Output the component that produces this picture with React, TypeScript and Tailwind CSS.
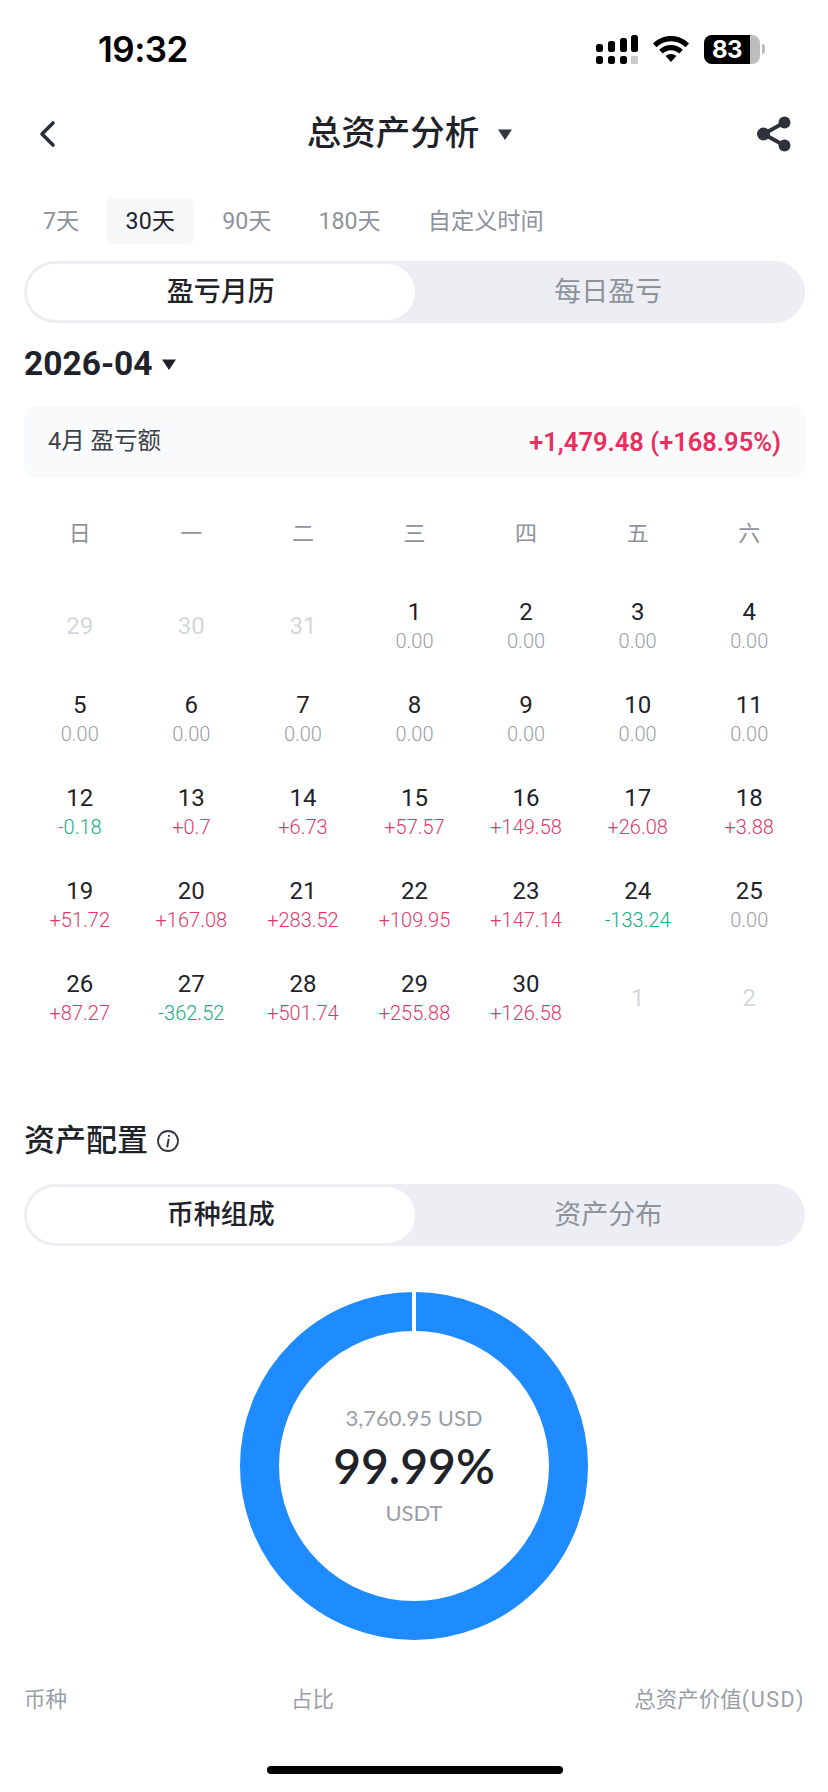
import React from 'react';

const CJK = '[font-family:Roboto,"Noto_Sans_CJK_SC",sans-serif]';

type Day = { d: number; v?: string; muted?: boolean };

const days: Day[] = [
    { d: 29, muted: true }, { d: 30, muted: true }, { d: 31, muted: true },
    { d: 1, v: '0.00' }, { d: 2, v: '0.00' }, { d: 3, v: '0.00' }, { d: 4, v: '0.00' },
    { d: 5, v: '0.00' }, { d: 6, v: '0.00' }, { d: 7, v: '0.00' }, { d: 8, v: '0.00' },
    { d: 9, v: '0.00' }, { d: 10, v: '0.00' }, { d: 11, v: '0.00' },
    { d: 12, v: '-0.18' }, { d: 13, v: '+0.7' }, { d: 14, v: '+6.73' }, { d: 15, v: '+57.57' },
    { d: 16, v: '+149.58' }, { d: 17, v: '+26.08' }, { d: 18, v: '+3.88' },
    { d: 19, v: '+51.72' }, { d: 20, v: '+167.08' }, { d: 21, v: '+283.52' }, { d: 22, v: '+109.95' },
    { d: 23, v: '+147.14' }, { d: 24, v: '-133.24' }, { d: 25, v: '0.00' },
    { d: 26, v: '+87.27' }, { d: 27, v: '-362.52' }, { d: 28, v: '+501.74' }, { d: 29, v: '+255.88' },
    { d: 30, v: '+126.58' }, { d: 1, muted: true }, { d: 2, muted: true },
];

const valueColor = (v: string) => {
    if (v.startsWith('+')) return 'text-[#e0386a]';
    if (v.startsWith('-')) return 'text-[#16ad80]';
    return 'text-[#9a9ea6]';
};

const Segment = ({ left, right }: { left: string; right: string }) => (
    <div className="ml-6 mr-[23px] grid h-[62px] grid-cols-2 rounded-full bg-[#eceef3] p-[3px]">
        <div className="flex items-center justify-center rounded-full bg-white text-[27px] font-medium text-[#1f2329]">{left}</div>
        <div className="flex items-center justify-center text-[27px] text-[#8e929b]">{right}</div>
    </div>
);

const Caret = ({ className }: { className: string }) => (
    <svg viewBox="0 0 16 13" className={className}>
        <path d="M1 1.500h14L8 12z" fill="currentColor" />
    </svg>
);

const StatusIcons = () => (
    <div className="flex items-center">
        <svg viewBox="0 0 42 29" className="h-[29px] w-[42px]">
            <g fill="#000">
                <rect x="0" y="9" width="7" height="8" rx="2.500" />
                <rect x="12" y="6" width="7" height="11" rx="2.500" />
                <rect x="24" y="3" width="7" height="14" rx="2.500" />
                <rect x="35" y="0" width="7" height="17" rx="2.500" />
                <rect x="0" y="21" width="7" height="8" rx="2.500" />
                <rect x="12" y="21" width="7" height="8" rx="2.500" />
                <rect x="24" y="21" width="7" height="8" rx="2.500" />
            </g>
            <rect x="35" y="21" width="7" height="8" rx="1" fill="#c9c9c9" />
        </svg>
        <svg viewBox="0 0 36 26" className="ml-[15px] h-[26px] w-9">
            <path d="M18 0C11 0 5 2.600 0 7.400l3.400 3.800C7.400 7.400 12.400 5.200 18 5.200s10.600 2.200 14.600 6L36 7.400C31 2.600 25 0 18 0z" fill="#000" />
            <path d="M18 9c-4.600 0-8.600 1.700-11.800 4.700l3.500 3.900c2.200-2.100 5-3.400 8.300-3.400s6.100 1.300 8.300 3.400l3.500-3.900C26.600 10.700 22.600 9 18 9z" fill="#000" />
            <path d="M18 18c-2.100 0-4 .8-5.400 2.100L18 26l5.400-5.900C22 18.800 20.100 18 18 18z" fill="#000" />
        </svg>
        <div className="ml-[15px] flex items-center">
            <div className="flex h-[29px] w-14 overflow-hidden rounded-lg bg-[#bdbdbd]">
                <div className="flex w-[46px] items-center justify-center bg-black font-['Inter',sans-serif] text-[24px] font-bold leading-[29px] tracking-[-0.5px] text-white">83</div>
            </div>
            <div className="ml-[2px] h-[10px] w-[3px] rounded-r-full bg-[#bdbdbd]" />
        </div>
    </div>
);

export default function App() {
    return (
        <div className={`relative h-[1792px] w-[828px] overflow-hidden bg-white ${CJK}`}>
            <div className="flex h-[98px] items-center justify-between pl-[98px] pr-[63px]">
                <span className="font-['Inter',sans-serif] text-[35px] font-semibold tracking-[-0.5px] text-black">19:32</span>
                <StatusIcons />
            </div>

            <div className="flex h-[72px] items-center justify-between pl-[38px] pr-[37px]">
                <svg viewBox="0 0 18 28" className="h-[28px] w-[18px]">
                    <path d="M15 3L4 14l11 11" fill="none" stroke="#2b2f36" strokeWidth="3.600" strokeLinecap="round" strokeLinejoin="round" />
                </svg>
                <div className="flex items-center pl-[7px]">
                    <span className="text-[34.500px] font-medium text-[#1f2329]">总资产分析</span>
                    <Caret className="ml-[18px] h-[13px] w-4 text-[#33373e]" />
                </div>
                <svg viewBox="0 0 34 36" className="h-9 w-[34px]">
                    <path d="M6.500 18L27.500 6.500M6.500 18l21 11.500" stroke="#2f3238" strokeWidth="4" fill="none" />
                    <circle cx="6.500" cy="18" r="6.500" fill="#2f3238" />
                    <circle cx="27.500" cy="6.500" r="6" fill="#2f3238" />
                    <circle cx="27.500" cy="29.500" r="6" fill="#2f3238" />
                </svg>
            </div>

            <div className="mt-[28px] flex h-[46px] items-center pl-[43px] text-[23.200px] text-[#8e929b]">
                <span>7天</span>
                <span className="ml-[27px] flex h-[46px] w-[88px] items-center justify-center rounded-md bg-[#f5f7f9] text-[#1f2329]">30天</span>
                <span className="ml-[28px]">90天</span>
                <span className="ml-[47px]">180天</span>
                <span className="ml-[47px]">自定义时间</span>
            </div>

            <div className="mt-[17px]">
                <Segment left="盈亏月历" right="每日盈亏" />
            </div>

            <div className="ml-6 mr-[23px] mt-[21px] flex h-10 items-center">
                <span className="text-[33.500px] font-bold text-[#1f2329]">2026-04</span>
                <Caret className="ml-[8px] h-[13px] w-4 text-[#1f2329]" />
            </div>

            <div className="ml-6 mr-[23px] mt-[22px] flex h-[72px] items-center justify-between rounded-xl bg-[#f9fafb] pl-6 pr-6">
                <span className="text-[23.500px] text-[#3c4048]">4月 盈亏额</span>
                <span className="text-[25.500px] font-semibold text-[#e8305f]">+1,479.48 (+168.95%)</span>
            </div>

            <div className="ml-6 mr-[23px] mt-[35px] grid h-10 grid-cols-7 items-center text-center text-[22px] text-[#8e929b]">
                {['日', '一', '二', '三', '四', '五', '六'].map((w) => (
                    <span key={w}>{w}</span>
                ))}
            </div>

            <div className="ml-6 mr-[23px] mt-[27px] grid grid-cols-7 auto-rows-[92.800px]">
                {days.map((day, i) => (
                    <div key={i} className="flex flex-col items-center justify-center">
                        <span className={`text-[24px] leading-[30px] ${day.muted ? 'text-[#d5d7db]' : 'text-[#1f2329]'}`}>{day.d}</span>
                        {day.v && <span className={`text-[20px] font-light leading-[28px] ${valueColor(day.v)}`}>{day.v}</span>}
                    </div>
                ))}
            </div>

            <div className="ml-6 mr-[23px] mt-[77px] flex h-10 items-center">
                <span className="text-[31px] font-medium text-[#1f2329]">资产配置</span>
                <svg viewBox="0 0 24 24" className="ml-[8px] h-6 w-6">
                    <circle cx="12" cy="12" r="10" fill="none" stroke="#33373e" strokeWidth="1.800" />
                    <path d="M12.600 10.500l-1.300 7M13 6.800v.1" fill="none" stroke="#33373e" strokeWidth="2" strokeLinecap="round" />
                </svg>
            </div>

            <div className="mt-[23px]">
                <Segment left="币种组成" right="资产分布" />
            </div>

            <div className="relative mx-auto mt-[46px] h-[348px] w-[348px]">
                <svg viewBox="0 0 348 348" className="h-full w-full">
                    <circle cx="174" cy="174" r="154.500" fill="none" stroke="#1e8bff" strokeWidth="39" />
                    <rect x="172" y="0" width="4" height="40" fill="#fff" />
                </svg>
                <div className="absolute inset-0 flex flex-col items-center justify-center font-['Lato',sans-serif]">
                    <span className="text-[22px] leading-[30px] text-[#9a9ea6]">3,760.95 USD</span>
                    <span className="mt-[3px] text-[48px] font-semibold leading-[60px] text-[#1f2329]">99.99%</span>
                    <span className="mt-[2px] text-[22px] leading-[30px] text-[#9a9ea6]">USDT</span>
                </div>
            </div>

            <div className="ml-6 mr-[23px] mt-[44px] grid h-[30px] grid-cols-[267px_1fr_auto] items-center text-[21.500px] text-[#9a9ea6]">
                <span>币种</span>
                <span>占比</span>
                <span>总资产价值<span className="tracking-[1.500px]">(USD)</span></span>
            </div>

            <div className="absolute bottom-[18px] left-[267px] h-2 w-[296px] rounded-full bg-black" />
        </div>
    );
}
